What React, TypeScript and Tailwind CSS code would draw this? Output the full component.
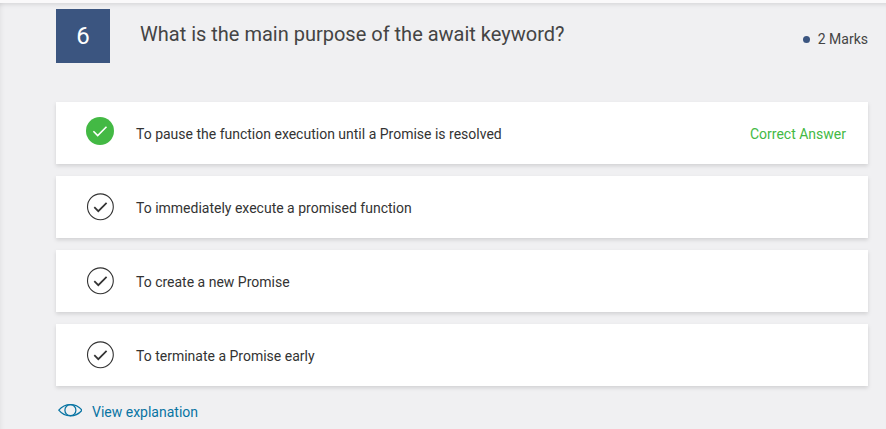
type Option = { text: string; correct?: boolean };

const options: Option[] = [
  { text: "To pause the function execution until a Promise is resolved", correct: true },
  { text: "To immediately execute a promised function" },
  { text: "To create a new Promise" },
  { text: "To terminate a Promise early" },
];

function CheckMark({ correct }: { correct?: boolean }) {
  return correct ? (
    <svg className="-mt-1 size-7 shrink-0" viewBox="0 0 28 28" fill="none">
      <circle cx="14" cy="14" r="14" fill="#43b944" />
      <path d="M7.4 14.2l4.3 4.3 8.8-8.7" stroke="#fff" strokeWidth="1.6" />
    </svg>
  ) : (
    <svg className="size-7 shrink-0" viewBox="0 0 28 28" fill="none" stroke="#333">
      <circle cx="14.4" cy="13.8" r="12.9" strokeWidth="1.1" />
      <path d="M8.3 14.1l4 4.1 8.3-8.4" strokeWidth="1.7" />
    </svg>
  );
}

function OptionCard({ text, correct }: Option) {
  return (
    <li className="flex h-[62px] items-center bg-white pr-[22px] pl-[30px] shadow-[0_2px_4px_rgba(0,0,0,0.13)]">
      <CheckMark correct={correct} />
      <span className="ml-[22px] pt-0.5 text-sm leading-5 text-[#333]">{text}</span>
      {correct && <span className="ml-auto pt-0.5 text-sm leading-5 text-[#43b944]">Correct Answer</span>}
    </li>
  );
}

export default function App() {
  return (
    <div className="h-[429px] w-full overflow-hidden bg-[#faf9fa] pt-[3px] font-[Roboto,sans-serif]">
      <main className="h-[426px] bg-[#f0f0f2] pt-1.5 pr-[18px] pl-14 shadow-[inset_0_5px_5px_-4px_rgba(0,0,0,0.13),inset_5px_0_5px_-4px_rgba(0,0,0,0.06)]">
        <header className="flex h-[93px] items-start">
          <div className="flex size-[54px] items-center justify-center bg-[#3b5580] text-2xl text-white">6</div>
          <h1 className="mt-[11px] ml-[30px] text-[20px] leading-7 text-[#444]">What is the main purpose of the await keyword?</h1>
          <div className="mt-5 ml-auto flex items-center text-sm leading-5 text-[#444]">
            <span className="mr-2 size-[7px] rounded-full bg-[#3b5580]" />
            2 Marks
          </div>
        </header>
        <ul className="flex flex-col gap-3">
          {options.map((option) => (
            <OptionCard key={option.text} {...option} />
          ))}
        </ul>
        <a className="mt-4 ml-0.5 flex items-center text-sm leading-5 text-[#0874a3]">
          <svg className="-mt-1 mr-2.5 h-4 w-6" viewBox="0 0 24 16" fill="none" stroke="currentColor" strokeWidth="1.25">
            <path d="M.8 8.2C4.2 4 8 2.5 12.4 2.5S20.7 4 24 8.2c-3.4 4.1-7.2 5.7-11.6 5.7S4.1 12.3.8 8.2Z" />
            <circle cx="12.4" cy="8.2" r="5.5" />
          </svg>
          View explanation
        </a>
      </main>
    </div>
  );
}
